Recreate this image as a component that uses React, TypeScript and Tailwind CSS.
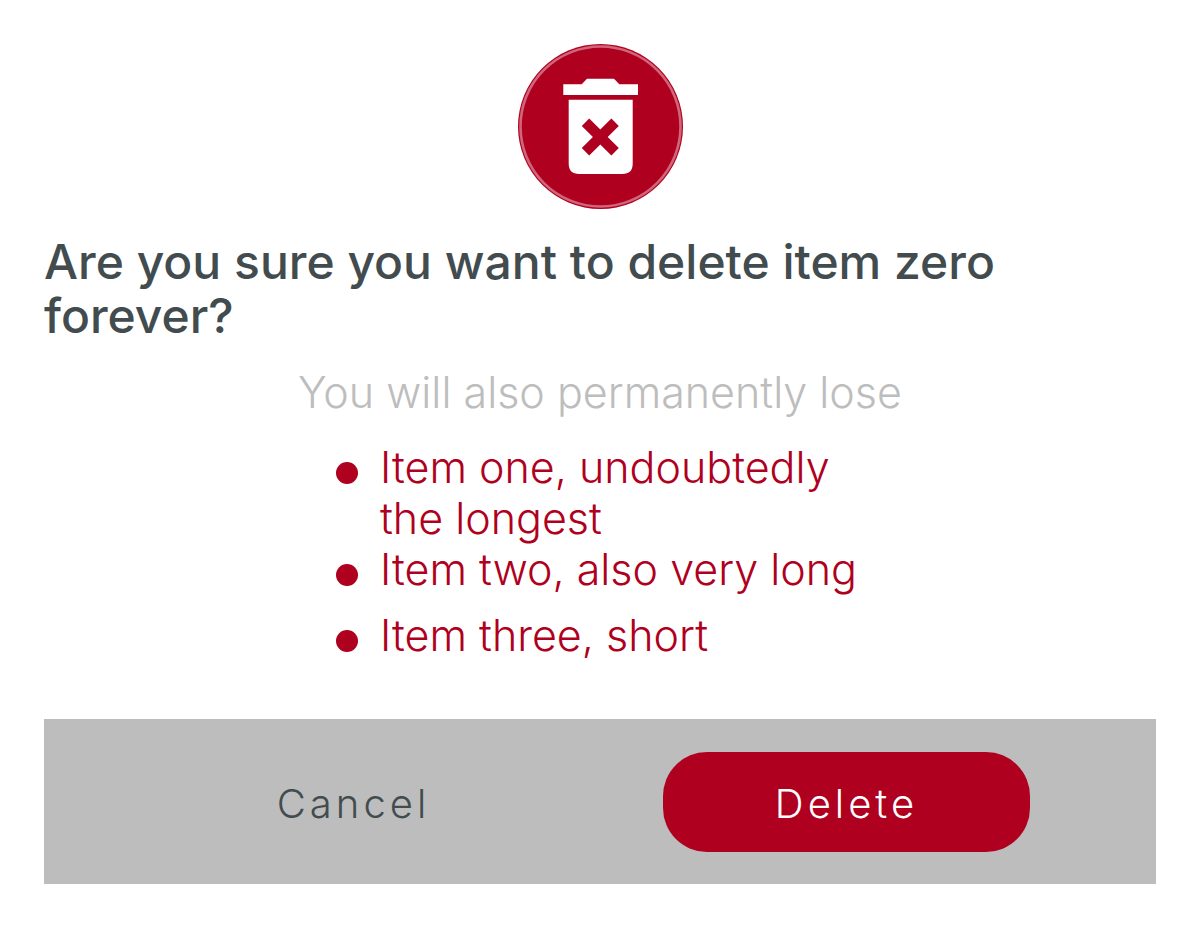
const losses = ["Item one, undoubtedly the longest", "Item two, also very long", "Item three, short"];

function DeleteIcon() {
  return (
    <svg viewBox="0 0 165 165" className="mx-auto block w-[165px]" aria-hidden="true">
      <circle cx="82.5" cy="82.5" r="82.5" fill="#b00020" />
      <circle cx="82.5" cy="82.5" r="80" fill="none" stroke="#d0667a" strokeWidth="2.6" />
      <path
        fill="#fff"
        d="M45.3 40.3H63.7L69 34.7H96L101.3 40.3H120V51H45.3ZM50.7 55.7H114.7V119.5Q114.7 130 104.2 130H61.2Q50.7 130 50.7 119.5Z"
      />
      <path
        fill="#b00020"
        d="M71.2 74.5L82.3 85.6L93.4 74.5L100.8 81.9L89.7 93L100.8 104.1L93.4 111.5L82.3 100.4L71.2 111.5L63.8 104.1L74.9 93L63.8 81.9Z"
      />
    </svg>
  );
}

export default function App() {
  return (
    <main className="bg-white p-11 font-['Inter',sans-serif] text-[#424c4f]">
      <DeleteIcon />
      <h1 className="mt-[26px] text-[48px] leading-[54px] font-medium">
        Are you sure you want to delete item zero forever?
      </h1>
      <p className="mt-6 text-center text-[43px] leading-[51px] font-light text-[#bdbdbd]">
        You will also permanently lose
      </p>
      <ul className="mx-auto mt-6 w-[528px] max-w-full text-[43px] leading-[51px] font-light text-[#b00020]">
        {losses.map((item) => (
          <li key={item} className="flex min-h-[66px] gap-[22px]">
            <span className="mt-5 size-[22px] shrink-0 rounded-full bg-[#b00020]" />
            <span>{item}</span>
          </li>
        ))}
      </ul>
      <div className="mt-[43px] flex justify-evenly bg-[#bdbdbd] pt-[33px] pb-8 text-[40px] leading-[60px] font-light tracking-widest">
        <button type="button" className="w-[33%] rounded-[44px] pt-[22px] pb-[18px]">
          Cancel
        </button>
        <button type="button" className="w-[33%] rounded-[44px] bg-[#b00020] pt-[22px] pb-[18px] text-white">
          Delete
        </button>
      </div>
    </main>
  );
}
